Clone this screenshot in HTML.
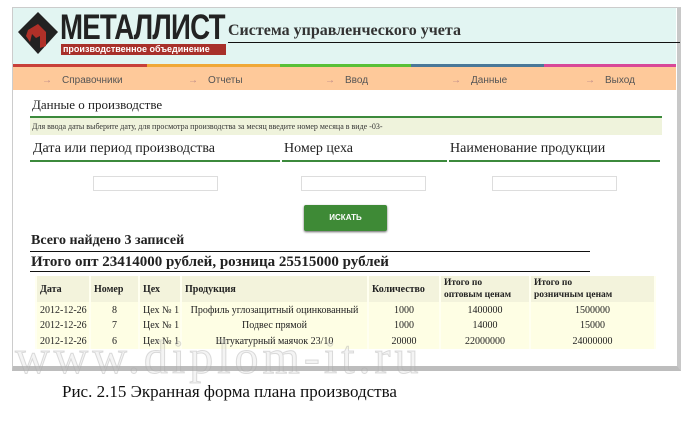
<!DOCTYPE html>
<html><head><meta charset="utf-8"><style>
body{margin:0;width:693px;height:424px;background:#fff;position:relative;overflow:hidden;font-family:"Liberation Serif",serif}
.a{position:absolute}
.s{font-family:"Liberation Sans",sans-serif}
.fr{left:12px;top:7px;width:664px;height:358px;border:1px solid #ccc;border-right:4px solid #c8c8c8;border-bottom:5px solid #bdbdbd;background:#fff}
.nav span{position:absolute;top:75px;font-size:10px;color:#555;font-family:"Liberation Sans",sans-serif}
.nav i{font-style:normal;color:#b88;margin-right:10px}
.gl{height:2px;background:#3c8a3c}
input{position:absolute;height:13px;border:1px solid #ddd;background:#fff;margin:0;padding:0}
table{table-layout:fixed}
td{padding:0 3px;font-size:10px;color:#222;white-space:nowrap;overflow:hidden}
</style></head><body>
<div class="a fr"></div>
<div class="a" style="left:13px;top:8px;width:663px;height:56px;background:#e2f5f2"></div>
<svg class="a" style="left:16px;top:10px" width="44" height="46" viewBox="0 0 44 46"><polygon points="22,2 42,22 22,44 2,22" fill="#222"/><polygon points="12,20 22,14 30,22 30,36 24,38 24,26 20,28 16,24 14,32 10,26" fill="#b03028"/></svg>
<div class="a s" style="left:60px;top:8px;font-size:35px;font-weight:bold;color:#222;letter-spacing:-1px;transform:scaleX(0.79);transform-origin:left">МЕТАЛЛИСТ</div>
<div class="a s" style="left:61px;top:44px;width:163px;height:11px;background:#a8302a;color:#fff;font-size:9px;line-height:11px;font-weight:bold;padding-left:2px;white-space:nowrap;overflow:hidden">производственное объединение</div>
<div class="a" style="left:228px;top:22px;font-size:16px;font-weight:bold;color:#333">Система управленческого учета</div>
<div class="a" style="left:228px;top:42px;width:452px;height:1px;background:#111"></div>
<div class="a" style="left:13px;top:64px;width:134px;height:3px;background:#c8403a"></div>
<div class="a" style="left:147px;top:64px;width:133px;height:3px;background:#f0a838"></div>
<div class="a" style="left:280px;top:64px;width:131px;height:3px;background:#58c038"></div>
<div class="a" style="left:411px;top:64px;width:133px;height:3px;background:#4a7898"></div>
<div class="a" style="left:544px;top:64px;width:132px;height:3px;background:#d84898"></div>
<div class="a" style="left:13px;top:67px;width:663px;height:23px;background:#fec99a"></div>
<div class="nav"><span style="left:42px"><i>→</i>Справочники</span><span style="left:188px"><i>→</i>Отчеты</span><span style="left:325px"><i>→</i>Ввод</span><span style="left:451px"><i>→</i>Данные</span><span style="left:585px"><i>→</i>Выход</span></div>
<div class="a" style="left:32px;top:97px;font-size:13px;color:#222">Данные о производстве</div>
<div class="a gl" style="left:30px;top:116px;width:632px"></div>
<div class="a" style="left:30px;top:118px;width:632px;height:17px;background:#eff3dc"></div>
<div class="a" style="left:32px;top:122px;font-size:8px;color:#333">Для ввода даты выберите дату, для просмотра производства за месяц введите номер месяца в виде -03-</div>
<div class="a" style="left:33px;top:141px;font-size:14px;color:#222">Дата или период производства</div>
<div class="a" style="left:284px;top:141px;font-size:14px;color:#222">Номер цеха</div>
<div class="a" style="left:450px;top:141px;font-size:14px;color:#222">Наименование продукции</div>
<div class="a gl" style="left:30px;top:160px;width:250px"></div>
<div class="a gl" style="left:282px;top:160px;width:165px"></div>
<div class="a gl" style="left:449px;top:160px;width:211px"></div>
<input style="left:93px;top:176px;width:123px"><input style="left:301px;top:176px;width:123px"><input style="left:492px;top:176px;width:123px">
<div class="a s" style="left:304px;top:205px;width:83px;height:26px;background:#3e8a36;border-radius:2px;box-shadow:0 1px 2px #666;color:#fff;font-size:8px;font-weight:bold;text-align:center;line-height:26px">ИСКАТЬ</div>
<div class="a" style="left:31px;top:233px;font-size:14px;font-weight:bold;color:#222">Всего найдено 3 записей</div>
<div class="a" style="left:30px;top:251px;width:560px;height:1px;background:#111"></div>
<div class="a" style="left:31px;top:254px;font-size:15px;font-weight:bold;color:#222">Итого опт 23414000 рублей, розница 25515000 рублей</div>
<div class="a" style="left:30px;top:271px;width:560px;height:1px;background:#111"></div>
<table class="a" style="left:35px;top:276px;border-collapse:separate;border-spacing:2px 0;width:621px;background:#fffff0">
<col style="width:52px"><col style="width:47px"><col style="width:40px"><col style="width:185px"><col style="width:70px"><col style="width:88px"><col>
<tr style="background:#f3f3dc;height:26px"><td><b>Дата</b></td><td><b>Номер</b></td><td><b>Цех</b></td><td><b>Продукция</b></td><td><b>Количество</b></td><td style="font-size:9.5px;line-height:12px"><b>Итого по<br>оптовым ценам</b></td><td style="font-size:9.5px;line-height:12px"><b>Итого по<br>розничным ценам</b></td></tr>
<tr style="height:16px;background:#fefee4"><td>2012-12-26</td><td align="center">8</td><td>Цех № 1</td><td align="center">Профиль углозащитный оцинкованный</td><td align="center">1000</td><td align="center">1400000</td><td align="center">1500000</td></tr>
<tr style="height:15px;background:#fefee4"><td>2012-12-26</td><td align="center">7</td><td>Цех № 1</td><td align="center">Подвес прямой</td><td align="center">1000</td><td align="center">14000</td><td align="center">15000</td></tr>
<tr style="height:16px;background:#fefee4"><td>2012-12-26</td><td align="center">6</td><td>Цех № 1</td><td align="center">Штукатурный маячок 23/10</td><td align="center">20000</td><td align="center">22000000</td><td align="center">24000000</td></tr>
</table>
<div class="a" style="left:15px;top:330px;font-size:48px;color:rgba(200,200,200,0.2);letter-spacing:4px;-webkit-text-stroke:1px rgba(170,170,170,0.4)">www.diplom-it.ru</div>
<div class="a" style="left:62px;top:382px;font-size:17px;color:#111">Рис. 2.15 Экранная форма плана производства</div>
</body></html>
